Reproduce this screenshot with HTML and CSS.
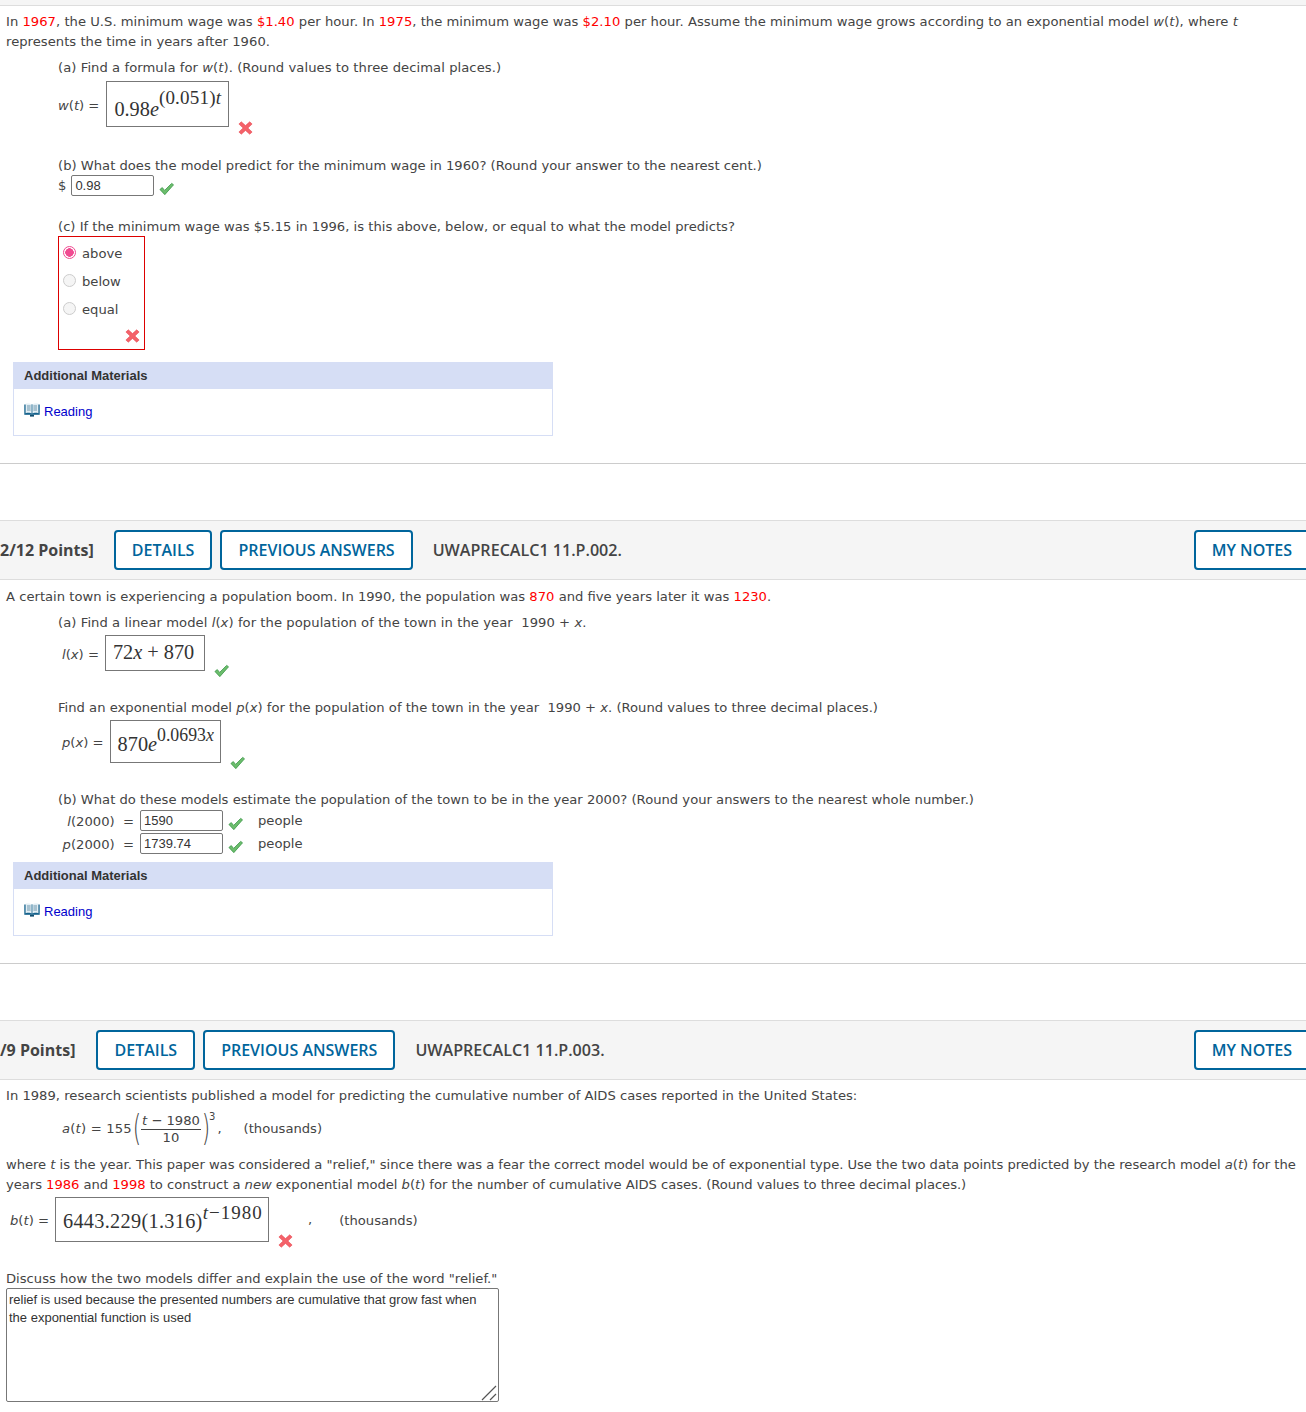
FILE: index.html
```html
<!DOCTYPE html>
<html lang="en">
<head>
    <meta charset="UTF-8">
    <meta name="viewport" content="width=device-width, initial-scale=1.0">
    <title>Assignment</title>
    <link rel="stylesheet" href="styles.css">
</head>
<body>
    <svg class="defs" width="0" height="0">
        <symbol id="ico-check" viewBox="0 0 16 14">
            <path d="M1 7.5 L3.5 5.5 L6 8.5 L13.5 1 L15.5 2.5 L6.2 13 Z" fill="#6cbd6c" stroke="#3f9a4c" stroke-width="0.9" stroke-linejoin="round"/>
        </symbol>
        <symbol id="ico-cross" viewBox="0 0 14 14">
            <path d="M2.8 0.8 L7 4.6 L11.2 0.8 L13.6 3 L9.4 7 L13.6 11 L11.2 13.2 L7 9.4 L2.8 13.2 L0.4 11 L4.6 7 L0.4 3 Z" fill="#f4626a" stroke="#ea4d55" stroke-width="0.6" stroke-linejoin="round"/>
        </symbol>
        <symbol id="ico-book" viewBox="0 0 16 14">
            <path d="M0.3 1.5 H15.7 V11.8 H0.3 Z" fill="#14628c"/>
            <path d="M1.6 0.8 C4 0.2 6.5 0.5 7.6 1.5 V10.6 C6.5 9.8 4 9.6 1.6 10.2 Z M14.4 0.8 C12 0.2 9.5 0.5 8.4 1.5 V10.6 C9.5 9.8 12 9.6 14.4 10.2 Z" fill="#e3eef4"/>
            <path d="M3 3 H6.6 M3 5 H6.6 M3 7 H6.6 M9.4 3 H13 M9.4 5 H13 M9.4 7 H13" stroke="#5f8aa3" stroke-width="0.9"/>
            <path d="M6 11.8 H10 V13.6 H6 Z" fill="#0f4c6e"/>
        </symbol>
    </svg>

    <div class="top-strip"></div>

    <!-- question 1 -->
    <section class="question q-first">
        <p class="intro intro-wage">In <span class="red">1967</span>, the U.S. minimum wage was <span class="red">$1.40</span> per hour. In <span class="red">1975</span>, the minimum wage was <span class="red">$2.10</span> per hour. Assume the minimum wage grows according to an exponential model <i>w</i>(<i>t</i>), where <i>t</i> represents the time in years after 1960.</p>

        <div class="part">
            <p class="line line-wide">(a) Find a formula for <i>w</i>(<i>t</i>). (Round values to three decimal places.)</p>
            <div class="answer-row row-w">
                <span class="eq-label"><i>w</i>(<i>t</i>) =</span>
                <span class="math-box box-w"><span class="mn">0.98<i>e</i></span><sup class="mexp exp-w">(0.051)<i>t</i></sup></span>
                <svg class="ico mark-low"><use href="#ico-cross"/></svg>
            </div>

            <p class="line line-b1">(b) What does the model predict for the minimum wage in 1960? (Round your answer to the nearest cent.)</p>
            <div class="dollar-row">
                <span>$</span>
                <input class="num-input" type="text" value="0.98">
                <svg class="ico"><use href="#ico-check"/></svg>
            </div>

            <p class="line line-c">(c) If the minimum wage was $5.15 in 1996, is this above, below, or equal to what the model predicts?</p>
            <div class="radio-box">
                <label class="radio-row"><input type="radio" name="c1" checked> above</label>
                <label class="radio-row"><input type="radio" name="c1"> below</label>
                <label class="radio-row"><input type="radio" name="c1"> equal</label>
                <svg class="ico radio-mark"><use href="#ico-cross"/></svg>
            </div>
        </div>

        <div class="materials">
            <div class="materials-head">Additional Materials</div>
            <div class="materials-body"><svg class="book"><use href="#ico-book"/></svg> <a href="#">Reading</a></div>
        </div>
    </section>

    <!-- question 2 -->
    <header class="q-bar">
        <span class="points">2/12 Points]</span>
        <a class="btn" href="#">DETAILS</a>
        <a class="btn" href="#">PREVIOUS ANSWERS</a>
        <span class="q-code">UWAPRECALC1 11.P.002.</span>
        <a class="btn btn-notes" href="#">MY NOTES</a>
    </header>

    <section class="question q-mid">
        <p class="intro">A certain town is experiencing a population boom. In 1990, the population was <span class="red">870</span> and five years later it was <span class="red">1230</span>.</p>

        <div class="part">
            <p class="line line-wide">(a) Find a linear model <i>l</i>(<i>x</i>) for the population of the town in the year &nbsp;1990 + <i>x</i>.</p>
            <div class="answer-row row-l">
                <span class="eq-label"><i>l</i>(<i>x</i>) =</span>
                <span class="math-box box-l"><span class="mn">72<i>x</i> + 870</span></span>
                <svg class="ico mark-low mark-check"><use href="#ico-check"/></svg>
            </div>

            <p class="line line-exp">Find an exponential model <i>p</i>(<i>x</i>) for the population of the town in the year &nbsp;1990 + <i>x</i>. (Round values to three decimal places.)</p>
            <div class="answer-row row-p">
                <span class="eq-label"><i>p</i>(<i>x</i>) =</span>
                <span class="math-box box-p"><span class="mn">870<i>e</i></span><sup class="mexp exp-p">0.0693<i>x</i></sup></span>
                <svg class="ico mark-low mark-check"><use href="#ico-check"/></svg>
            </div>

            <p class="line line-b2">(b) What do these models estimate the population of the town to be in the year 2000? (Round your answers to the nearest whole number.)</p>
            <div class="est-grid">
                <span class="est-label"><i>l</i>(2000) &nbsp;=</span>
                <input class="num-input" type="text" value="1590">
                <svg class="ico"><use href="#ico-check"/></svg>
                <span class="est-unit">people</span>
                <span class="est-label"><i>p</i>(2000) &nbsp;=</span>
                <input class="num-input" type="text" value="1739.74">
                <svg class="ico"><use href="#ico-check"/></svg>
                <span class="est-unit">people</span>
            </div>
        </div>

        <div class="materials materials-q2">
            <div class="materials-head">Additional Materials</div>
            <div class="materials-body"><svg class="book"><use href="#ico-book"/></svg> <a href="#">Reading</a></div>
        </div>
    </section>

    <!-- question 3 -->
    <header class="q-bar">
        <span class="points points-q3">/9 Points]</span>
        <a class="btn" href="#">DETAILS</a>
        <a class="btn" href="#">PREVIOUS ANSWERS</a>
        <span class="q-code">UWAPRECALC1 11.P.003.</span>
        <a class="btn btn-notes" href="#">MY NOTES</a>
    </header>

    <section class="question q-last">
        <p class="intro">In 1989, research scientists published a model for predicting the cumulative number of AIDS cases reported in the United States:</p>

        <div class="formula">
            <span class="formula-lhs"><i>a</i>(<i>t</i>) = 155</span>
            <span class="paren">(</span>
            <span class="frac"><span class="frac-top"><i>t</i> &minus; 1980</span><span class="frac-bot">10</span></span>
            <span class="paren">)</span>
            <span class="cube">3</span>
            <span class="comma">,</span>
            <span class="thousands">(thousands)</span>
        </div>

        <p class="intro intro-where">where <i>t</i> is the year. This paper was considered a "relief," since there was a fear the correct model would be of exponential type. Use the two data points predicted by the research model <i>a</i>(<i>t</i>) for the years <span class="red">1986</span> and <span class="red">1998</span> to construct a <i>new</i> exponential model <i>b</i>(<i>t</i>) for the number of cumulative AIDS cases. (Round values to three decimal places.)</p>

        <div class="answer-row row-b">
            <span class="eq-label"><i>b</i>(<i>t</i>) =</span>
            <span class="math-box box-b"><span class="mn">6443.229(1.316)</span><sup class="mexp exp-b"><i>t</i>&minus;1980</sup></span>
            <svg class="ico mark-low"><use href="#ico-cross"/></svg>
            <span class="b-comma">,</span>
            <span class="b-unit">(thousands)</span>
        </div>

        <p class="line line-discuss">Discuss how the two models differ and explain the use of the word "relief."</p>
        <div class="discuss-wrap">
            <textarea class="discuss" spellcheck="false">relief is used because the presented numbers are cumulative that grow fast when the exponential function is used</textarea>
            <svg class="grip" width="16" height="16" viewBox="0 0 16 16"><path d="M1 15 L15 1 M9 15 L15 9" stroke="#555" stroke-width="1.2" fill="none"/></svg>
        </div>
    </section>
</body>
</html>
```

FILE: styles.css
```css
html, body {
    margin: 0;
    padding: 0;
}

body {
    width: 1306px;
    height: 1412px;
    overflow: hidden;
    background: #fff;
    color: #444;
    font-family: "DejaVu Sans", Verdana, sans-serif;
    font-size: 13.15px;
    line-height: 20px;
}

p {
    margin: 0;
}

.defs {
    position: absolute;
}

.red {
    color: #f00;
}

.top-strip {
    height: 5px;
    background: #f5f5f5;
    border-bottom: 1px solid #ddd;
}

.question {
    padding: 6px 0 0 6px;
}

.q-first {
    box-sizing: border-box;
    height: 458px;
    border-bottom: 1px solid #ccc;
    margin-bottom: 56px;
}

.q-mid {
    box-sizing: border-box;
    height: 384px;
    padding-top: 7px;
    border-bottom: 1px solid #ccc;
    margin-bottom: 56px;
}

.q-last {
    box-sizing: border-box;
    height: 332px;
}

.intro {
    width: 1296px;
}

.intro-wage {
    letter-spacing: 0.02px;
}

.part {
    padding-left: 52px;
}

.line {
    height: 20px;
    white-space: nowrap;
}

.line-wide {
    letter-spacing: 0.06px;
}

.part > .line:first-child {
    margin-top: 6px;
}

/* answers with a typeset box */
.answer-row {
    display: flex;
    align-items: center;
}

.eq-label {
    margin-top: 3px;
    white-space: nowrap;
}

.math-box {
    display: flex;
    align-items: flex-start;
    box-sizing: border-box;
    border: 1px solid #777;
    color: #333;
    font-family: "Liberation Serif", "Times New Roman", serif;
    white-space: nowrap;
}

.mn {
    font-size: 20.3px;
    line-height: 24px;
}

.mexp {
    font-size: 19px;
    line-height: 20px;
}

.ico {
    width: 15px;
    height: 14px;
    flex: none;
}

.mark-low {
    align-self: flex-end;
    margin: 0 0 -8px 9px;
}

.mark-check {
    margin-bottom: -7px;
}

.row-w {
    margin-top: 3px;
}

.box-w {
    width: 123px;
    height: 46px;
    margin-left: 7px;
    padding: 15px 0 0 7px;
}

.exp-w {
    margin-top: -9px;
    letter-spacing: 0.2px;
}

.line-b1 {
    margin-top: 29px;
}

.dollar-row {
    display: flex;
    align-items: center;
    height: 21px;
    margin-top: -1px;
    gap: 5px;
}

.dollar-row .ico {
    margin: 7px 0 0;
}

.num-input {
    box-sizing: border-box;
    width: 83px;
    height: 21px;
    margin: 0;
    padding: 0 3px;
    border: 1px solid #777;
    border-radius: 2px;
    background: #fff;
    color: #333;
    font-family: "Liberation Sans", Arial, sans-serif;
    font-size: 13px;
}

.line-c {
    margin-top: 21px;
}

.radio-box {
    box-sizing: border-box;
    position: relative;
    width: 87px;
    height: 114px;
    margin-top: -1px;
    border: 1px solid #d00;
    padding-top: 2px;
}

.radio-row {
    display: flex;
    align-items: center;
    gap: 6px;
    height: 28px;
    padding: 2px 0 0 4px;
    box-sizing: border-box;
}

.radio-row input {
    appearance: none;
    box-sizing: border-box;
    width: 13px;
    height: 13px;
    margin: -4px 0 0;
    border: 1px solid #ccc;
    border-radius: 50%;
    background: #f5f5f5;
}

.radio-row input:checked {
    border-color: #f04b91;
    background: radial-gradient(circle, #f04b91 0 4px, #fff 4.5px);
}

.radio-mark {
    position: absolute;
    right: 4px;
    bottom: 6px;
}

/* additional materials */
.materials {
    box-sizing: border-box;
    width: 540px;
    height: 74px;
    margin: 12px 0 0 7px;
    border: 1px solid #d6def5;
    border-top: 0;
    font-family: "Liberation Sans", Arial, sans-serif;
}

.materials-head {
    height: 27px;
    margin: 0 -1px;
    padding-left: 11px;
    background: #d6def5;
    color: #333;
    font-size: 13px;
    font-weight: bold;
    line-height: 28px;
}

.materials-body {
    display: flex;
    align-items: center;
    gap: 4px;
    height: 44px;
    padding: 1px 0 0 10px;
    box-sizing: border-box;
    font-size: 13px;
}

.materials-body a {
    color: #00c;
    text-decoration: none;
}

.book {
    width: 16px;
    height: 14px;
    margin-top: -3px;
}

/* question header bar */
.q-bar {
    display: flex;
    align-items: center;
    box-sizing: border-box;
    height: 60px;
    background: #f5f5f5;
    border-top: 1px solid #ddd;
    border-bottom: 1px solid #ddd;
    font-family: "Open Sans", "Noto Sans", sans-serif;
    font-size: 16px;
    font-weight: 600;
    white-space: nowrap;
}

.points {
    margin-right: 20px;
    color: #444;
    font-weight: 700;
}

.points-q3 {
    margin-right: 21px;
}

.btn {
    display: flex;
    align-items: center;
    box-sizing: border-box;
    height: 40px;
    margin-right: 8px;
    padding: 0 16px;
    border: 2px solid #00659c;
    border-radius: 4px;
    background: #fff;
    color: #00659c;
    text-decoration: none;
}

.q-code {
    margin-left: 12px;
    color: #444;
    font-size: 16.1px;
}

.btn-notes {
    margin-left: auto;
    margin-right: -18px;
    padding-right: 30px;
}

/* question 2 */
.materials-q2 {
    margin-top: 8px;
}

.row-l {
    margin-top: 2px;
    padding-left: 4px;
}

.box-l {
    width: 100px;
    height: 36px;
    margin-left: 6px;
    padding: 4px 0 0 7px;
}

.line-exp {
    margin-top: 27px;
}

.row-p {
    margin-top: 2px;
    padding-left: 4px;
}

.box-p {
    width: 111px;
    height: 43px;
    margin-left: 6px;
    padding: 11px 0 0 7px;
}

.exp-p {
    margin-top: -7px;
    font-size: 17.8px;
}

.line-b2 {
    margin-top: 27px;
}

.est-grid {
    display: grid;
    grid-template-columns: 82px 83px 35px auto;
    grid-auto-rows: 21px;
    row-gap: 2px;
    align-items: center;
    width: max-content;
}

.est-label {
    justify-self: end;
    margin: 2px 6px 0 0;
    white-space: nowrap;
}

.est-grid .ico {
    margin: 7px 0 0 5px;
}

/* question 3 */
.formula {
    display: flex;
    align-items: center;
    height: 36px;
    margin-top: 5px;
    padding-left: 56px;
    white-space: nowrap;
}

.formula-lhs {
    letter-spacing: 0.2px;
}

.paren {
    margin: -3px -3px 0 -2px;
    font-size: 36px;
    font-weight: 200;
    line-height: 36px;
    transform: scaleX(0.6);
}

.frac {
    display: flex;
    flex-direction: column;
    align-items: center;
    line-height: 16px;
}

.frac-top {
    padding: 1px 1px 0;
    border-bottom: 1px solid #444;
}

.cube {
    align-self: flex-start;
    margin-left: -1px;
    font-size: 10px;
    line-height: 12px;
}

.comma {
    margin-left: 2px;
}

.thousands {
    margin-left: 22px;
}

.intro-where {
    margin-top: 8px;
    letter-spacing: -0.04px;
}

.row-b {
    margin-top: 2px;
    padding-left: 4px;
}

.row-b .mark-low {
    margin-bottom: -6px;
}

.box-b {
    width: 214px;
    height: 45px;
    margin-left: 6px;
    padding: 11px 0 0 7px;
}

.box-b .mn {
    letter-spacing: 0.3px;
}

.exp-b {
    margin-top: -6px;
    letter-spacing: 1px;
}

.b-comma {
    margin-left: 15px;
}

.b-unit {
    margin: 2px 0 0 27px;
}

.line-discuss {
    margin-top: 27px;
}

.discuss-wrap {
    position: relative;
    width: 493px;
    height: 114px;
    margin-top: -1px;
}

.discuss {
    display: block;
    box-sizing: border-box;
    width: 100%;
    height: 100%;
    margin: 0;
    padding: 2px;
    border: 1px solid #777;
    border-radius: 2px;
    color: #333;
    font-family: "Liberation Sans", Arial, sans-serif;
    font-size: 13px;
    line-height: 18px;
    resize: none;
}

.grip {
    position: absolute;
    right: 2px;
    bottom: 1px;
}
```
